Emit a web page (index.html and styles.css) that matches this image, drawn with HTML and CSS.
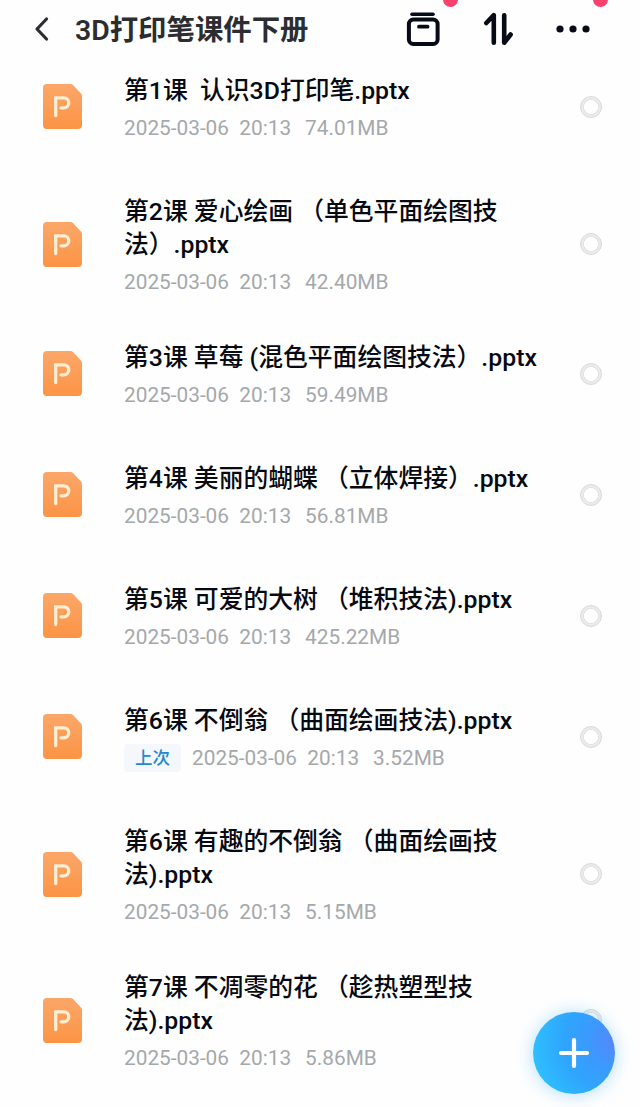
FILE: index.html
```html
<!DOCTYPE html>
<html lang="zh-CN">
<head>
    <meta charset="UTF-8">
    <meta name="viewport" content="width=device-width, initial-scale=1.0">
    <title>3D打印笔课件下册</title>
    <link rel="stylesheet" href="styles.css">
</head>
<body>
    <!-- shared icons -->
    <svg class="defs" width="0" height="0">
        <defs>
            <linearGradient id="orange" x1="0" y1="0" x2="0" y2="1">
                <stop offset="0" stop-color="#fba769"/>
                <stop offset="1" stop-color="#fb9445"/>
            </linearGradient>
        </defs>
        <symbol id="ppt" viewBox="0 0 39 45">
            <path d="M4 0H27.5Q29 0 30 1L38 9.500Q39 10.500 39 12V41Q39 45 35 45H4Q0 45 0 41V4Q0 0 4 0Z" fill="url(#orange)"/>
            <path d="M12.700 31.500V13.800H20.800A5 5 0 0 1 20.800 23.800H18" fill="none" stroke="#ffeed3" stroke-width="3.300" stroke-linecap="round"/>
        </symbol>
    </svg>

    <header class="header">
        <svg class="back" width="16" height="26" viewBox="0 0 16 26"><path d="M13.500 3L4 13L13.500 23" fill="none" stroke="#2c2d30" stroke-width="3.200" stroke-linecap="round" stroke-linejoin="round"/></svg>
        <h1>3D打印笔课件下册</h1>
        <div class="tools">
            <div class="tool">
                <svg width="34" height="34" viewBox="0 0 34 34" fill="none" stroke="#070b16" stroke-linecap="round"><path d="M6 2.200H27" stroke-width="3.600"/><rect x="2.900" y="7.500" width="28.700" height="24.500" rx="4.500" stroke-width="4"/><path d="M13 14.700H21.500" stroke-width="3.800"/></svg>
                <span class="dot"></span>
            </div>
            <div class="tool">
                <svg width="30" height="34" viewBox="0 0 30 34" fill="none" stroke="#070b16" stroke-width="4.600" stroke-linecap="round" stroke-linejoin="round"><path d="M3.300 11L10.800 3.200V30.800"/><path d="M21.200 3.200V30.800L27.600 22.500"/></svg>
            </div>
            <div class="tool">
                <svg width="34" height="34" viewBox="0 0 34 34" fill="#070b16"><circle cx="4" cy="17" r="3.600"/><circle cx="17" cy="17" r="3.600"/><circle cx="30" cy="17" r="3.600"/></svg>
                <span class="dot"></span>
            </div>
        </div>
    </header>

    <main class="list">
        <div class="item">
            <svg class="icon"><use href="#ppt"/></svg>
            <div class="info">
                <h2>第1课  认识3D打印笔.pptx</h2>
                <p><span>2025-03-06  20:13</span><span>74.01MB</span></p>
            </div>
            <span class="radio"></span>
        </div>
        <div class="item two-line">
            <svg class="icon"><use href="#ppt"/></svg>
            <div class="info">
                <h2>第2课 爱心绘画 （单色平面绘图技<br>法）.pptx</h2>
                <p><span>2025-03-06  20:13</span><span>42.40MB</span></p>
            </div>
            <span class="radio"></span>
        </div>
        <div class="item">
            <svg class="icon"><use href="#ppt"/></svg>
            <div class="info">
                <h2>第3课 草莓 (混色平面绘图技法）.pptx</h2>
                <p><span>2025-03-06  20:13</span><span>59.49MB</span></p>
            </div>
            <span class="radio"></span>
        </div>
        <div class="item">
            <svg class="icon"><use href="#ppt"/></svg>
            <div class="info">
                <h2>第4课 美丽的蝴蝶 （立体焊接）.pptx</h2>
                <p><span>2025-03-06  20:13</span><span>56.81MB</span></p>
            </div>
            <span class="radio"></span>
        </div>
        <div class="item">
            <svg class="icon"><use href="#ppt"/></svg>
            <div class="info">
                <h2>第5课 可爱的大树 （堆积技法).pptx</h2>
                <p><span>2025-03-06  20:13</span><span>425.22MB</span></p>
            </div>
            <span class="radio"></span>
        </div>
        <div class="item">
            <svg class="icon"><use href="#ppt"/></svg>
            <div class="info">
                <h2>第6课 不倒翁 （曲面绘画技法).pptx</h2>
                <p><b class="last">上次</b><span>2025-03-06  20:13</span><span>3.52MB</span></p>
            </div>
            <span class="radio"></span>
        </div>
        <div class="item two-line">
            <svg class="icon"><use href="#ppt"/></svg>
            <div class="info">
                <h2>第6课 有趣的不倒翁 （曲面绘画技<br>法).pptx</h2>
                <p><span>2025-03-06  20:13</span><span>5.15MB</span></p>
            </div>
            <span class="radio"></span>
        </div>
        <div class="item two-line">
            <svg class="icon"><use href="#ppt"/></svg>
            <div class="info">
                <h2>第7课 不凋零的花 （趁热塑型技<br>法).pptx</h2>
                <p><span>2025-03-06  20:13</span><span>5.86MB</span></p>
            </div>
            <span class="radio"></span>
        </div>
    </main>

    <button class="add">
        <svg width="32" height="32" viewBox="0 0 32 32"><path d="M16 3V29M3 16H29" stroke="#fff" stroke-width="4.200" stroke-linecap="round"/></svg>
    </button>
</body>
</html>
```
FILE: styles.css
```css
* {
    box-sizing: border-box;
}
body {
    margin: 0;
    height: 1107px;
    overflow: hidden;
    background-color: #fefefe;
    font-family: Roboto, "Noto Sans CJK SC", sans-serif;
    text-spacing-trim: space-all;
}
h1, h2, p {
    margin: 0;
    white-space: pre;
}
.defs {
    display: block;
}
.header {
    display: flex;
    align-items: center;
    height: 57px;
    padding: 0 50px 0 33px;
}
.header h1 {
    margin-left: 26px;
    padding-top: 4px;
    font-size: 28.4px;
    font-weight: 600;
    line-height: 40px;
    color: #2c2d30;
}
.tools {
    display: flex;
    gap: 43px;
    margin-left: auto;
}
.tool {
    position: relative;
    display: flex;
}
/* red badge, cut by the top edge */
.dot {
    position: absolute;
    top: -20px;
    right: -18px;
    width: 15px;
    height: 15px;
    border-radius: 50%;
    background-color: #fb416d;
}
.list {
    padding: 17px 38px 0 42.5px;
}
.item {
    display: flex;
    align-items: center;
    margin-bottom: 56px;
}
.item.two-line {
    margin-bottom: 48px;
}
.icon {
    width: 39px;
    height: 45px;
}
.info {
    flex: 1;
    margin-left: 42.5px;
}
.info h2 {
    font-size: 24.8px;
    font-weight: 500;
    line-height: 33px;
    color: #070a12;
}
.info p {
    display: flex;
    align-items: center;
    gap: 14px;
    height: 22px;
    margin-top: 10px;
    font-size: 20.8px;
    line-height: 22px;
    color: #a5a8ab;
}
.last {
    height: 28px;
    padding: 0 11px;
    margin-right: -3px;
    border-radius: 4px;
    background-color: #f4f8fc;
    color: #2388cf;
    font-size: 17.5px;
    font-weight: 500;
    line-height: 29px;
}
.radio {
    width: 22px;
    height: 22px;
    border: 1px solid #d9d9d9;
    border-radius: 50%;
    background: radial-gradient(circle, #fefefe 6.8px, #dedede 7.3px, #ececec 8.3px);
}
/* floating button over the list */
.add {
    position: absolute;
    right: 25px;
    bottom: 13px;
    display: flex;
    align-items: center;
    justify-content: center;
    width: 82px;
    height: 82px;
    padding: 0;
    border: none;
    border-radius: 50%;
    background: radial-gradient(circle at 98% 36%, #5687fb 0%, #3c99fd 26%, #2fa5fd 52%, #2ecbff 100%);
    box-shadow: 0 1px 18px rgba(60, 175, 255, 0.4);
}
```
